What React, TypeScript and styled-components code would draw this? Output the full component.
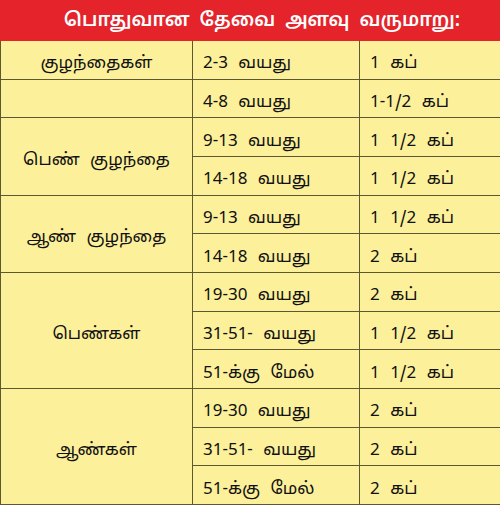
import React from 'react';
import styled, { createGlobalStyle } from 'styled-components';

const GlobalStyle = createGlobalStyle`
    html, body {
        margin: 0;
        padding: 0;
        background: #fcf09b;
    }
`;

const tamil = `'Noto Sans Tamil', 'Lohit Tamil', 'Noto Sans', 'Liberation Sans', sans-serif`;
const line = '#5e5832';

const Page = styled.div`
    width: 500px;
    height: 505px;
    display: flex;
    flex-direction: column;
    background: #fcf09b;
    font-family: ${tamil};
    color: #111;
`;

const Header = styled.div`
    height: 41px;
    flex: none;
    background: #e5232a;
    color: #fff;
    display: flex;
    align-items: center;
    justify-content: center;
    padding: 1px 0 0 24px;
    font-size: 19px;
    font-weight: 600;
    word-spacing: 5px;
    box-sizing: border-box;
`;

const Grid = styled.div`
    flex: 1;
    display: grid;
    grid-template-columns: 192px 167px 1fr;
    grid-template-rows: repeat(12, 1fr);
    border-left: 1px solid ${line};
`;

const Cell = styled.div<{ $span?: number; $align?: 'center' | 'left'; $last?: boolean }>`
    grid-row: span ${({ $span }) => $span ?? 1};
    display: flex;
    align-items: center;
    justify-content: ${({ $align }) => ($align === 'center' ? 'center' : 'flex-start')};
    padding: 8px 0 0 ${({ $align }) => ($align === 'center' ? '0' : '10px')};
    border-bottom: 1px solid ${line};
    border-right: ${({ $last }) => ($last ? 'none' : `1px solid ${line}`)};
    font-size: 17px;
    word-spacing: 6px;
    white-space: nowrap;
    box-sizing: border-box;
`;

type Group = { label: string; rows: [string, string][] };

const groups: Group[] = [
    { label: 'குழந்தைகள்', rows: [['2-3 வயது', '1 கப்']] },
    { label: '', rows: [['4-8 வயது', '1-1/2 கப்']] },
    {
        label: 'பெண் குழந்தை',
        rows: [
            ['9-13 வயது', '1 1/2 கப்'],
            ['14-18 வயது', '1 1/2 கப்'],
        ],
    },
    {
        label: 'ஆண் குழந்தை',
        rows: [
            ['9-13 வயது', '1 1/2 கப்'],
            ['14-18 வயது', '2 கப்'],
        ],
    },
    {
        label: 'பெண்கள்',
        rows: [
            ['19-30 வயது', '2 கப்'],
            ['31-51- வயது', '1 1/2 கப்'],
            ['51-க்கு மேல்', '1 1/2 கப்'],
        ],
    },
    {
        label: 'ஆண்கள்',
        rows: [
            ['19-30 வயது', '2 கப்'],
            ['31-51- வயது', '2 கப்'],
            ['51-க்கு மேல்', '2 கப்'],
        ],
    },
];

const App: React.FC = () => {
    return (
        <Page>
            <GlobalStyle />
            <Header>பொதுவான தேவை அளவு வருமாறு:</Header>
            <Grid>
                {groups.map((g, gi) => (
                    <React.Fragment key={gi}>
                        <Cell $span={g.rows.length} $align="center" style={{ gridColumn: 1 }}>
                            {g.label}
                        </Cell>
                        {g.rows.map(([age, amount], ri) => (
                            <React.Fragment key={ri}>
                                <Cell style={{ gridColumn: 2 }}>{age}</Cell>
                                <Cell $last style={{ gridColumn: 3 }}>
                                    {amount}
                                </Cell>
                            </React.Fragment>
                        ))}
                    </React.Fragment>
                ))}
            </Grid>
        </Page>
    );
};

export default App;
